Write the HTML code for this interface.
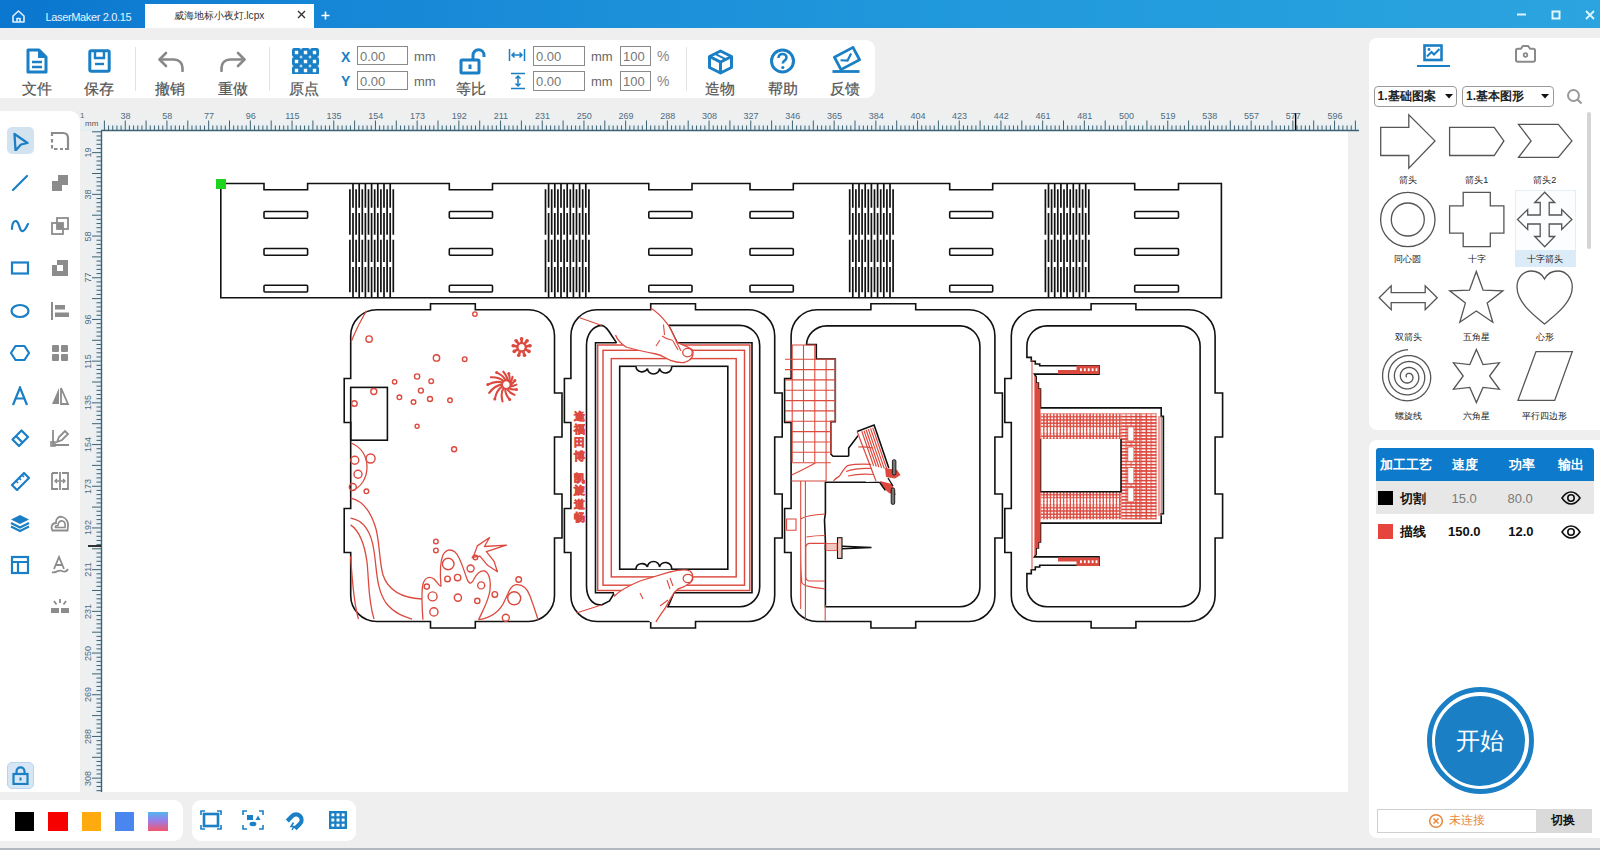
<!DOCTYPE html><html><head><meta charset="utf-8"><title>LaserMaker</title><style>

*{margin:0;padding:0;box-sizing:border-box}
html,body{width:1600px;height:850px;overflow:hidden;background:#efefef;font-family:"Liberation Sans",sans-serif;position:relative}
.a{position:absolute}
.t{position:absolute;white-space:nowrap;line-height:1}


.title{left:0;top:0;width:1600px;height:28px;background:linear-gradient(90deg,#0a76cf 0%,#1585d5 19%,#1c8fd9 38%,#2199dc 62%,#2ba4df 100%)}
.tab{left:145px;top:4px;width:169px;height:24px;background:#fff}
.panel{position:absolute;background:#fff}
.tb-lbl{position:absolute;top:81px;font-size:14.5px;color:#555;-webkit-text-stroke:0.22px #555;white-space:nowrap;line-height:1;width:40px;text-align:center}
.inp{position:absolute;border:1px solid #8a8a8a;background:#fff;font-size:13px;color:#777;line-height:19px;padding-left:2px}
.mm{position:absolute;font-size:13px;color:#666;line-height:1}
.rl{position:absolute;font-size:9px;color:#4d6c82;line-height:1;white-space:nowrap}


.dd{position:absolute;border:1px solid #9a9a9a;border-radius:4px;background:#fff;font-size:12px;font-weight:bold;color:#222;line-height:19px;padding-left:3px;white-space:nowrap}
.sl{position:absolute;font-size:9px;color:#222;white-space:nowrap;line-height:1;text-align:center;width:60px}
.th{position:absolute;font-size:12.5px;color:#fff;white-space:nowrap;line-height:1;font-weight:bold}
.td{position:absolute;font-size:13px;white-space:nowrap;line-height:1;font-weight:bold}

</style></head><body>
<div class="a title"></div>
<svg class="a" style="left:11px;top:9px" width="15" height="14" viewBox="0 0 15 14" ><path d="M2 7 L7.5 2 L13 7 V13 H2 Z M6 13 V9.5 H9 V13" fill="none" stroke="#dff1ff" stroke-width="1.6" stroke-linejoin="round"/></svg>
<div class="t" style="left:45.5px;top:11.5px;font-size:11px;letter-spacing:-0.35px;color:#e6f4ff">LaserMaker 2.0.15</div>
<div class="a tab"></div>
<div class="t" style="left:173.5px;top:11px;font-size:10.2px;color:#333">威海地标小夜灯.lcpx</div>
<svg class="a" style="left:297px;top:10px" width="9" height="9" viewBox="0 0 9 9" ><path d="M1 1L8 8M8 1L1 8" stroke="#333" stroke-width="1.4"/></svg>
<svg class="a" style="left:321px;top:11px" width="9" height="9" viewBox="0 0 9 9" ><path d="M4.5 0.5V8.5M0.5 4.5H8.5" stroke="#fff" stroke-width="1.6"/></svg>
<svg class="a" style="left:1517px;top:13px" width="9" height="3" viewBox="0 0 9 3" ><path d="M0 1.5H9" stroke="#e0f6ff" stroke-width="2"/></svg>
<svg class="a" style="left:1551px;top:10px" width="10" height="10" viewBox="0 0 10 10" ><rect x="1.5" y="1.5" width="7" height="7" fill="none" stroke="#e0f6ff" stroke-width="2"/></svg>
<svg class="a" style="left:1585px;top:10px" width="10" height="10" viewBox="0 0 10 10" ><path d="M1 1L9 9M9 1L1 9" stroke="#e0f6ff" stroke-width="1.8"/></svg>
<div class="panel" style="left:0;top:40px;width:875px;height:58px;border-radius:0 9px 9px 0"></div>
<div class="a" style="left:135px;top:47px;width:1px;height:44px;background:#e2e2e2"></div>
<div class="a" style="left:269px;top:47px;width:1px;height:44px;background:#e2e2e2"></div>
<div class="a" style="left:685.5px;top:47px;width:1px;height:44px;background:#e2e2e2"></div>
<svg class="a" style="left:26px;top:48px" width="22" height="26" viewBox="0 0 22 26" ><path d="M2 2H13L20 9V24H2Z" fill="none" stroke="#1a7fc5" stroke-width="3" stroke-linejoin="round"/><path d="M13 2V9H20" fill="#1a7fc5" stroke="#1a7fc5" stroke-width="2"/><path d="M6 14H16M6 19H16" stroke="#1a7fc5" stroke-width="2.4"/></svg>
<div class="tb-lbl" style="left:17px;top:81.5px">文件</div>
<svg class="a" style="left:88px;top:49px" width="23" height="24" viewBox="0 0 23 24" ><rect x="1.8" y="1.8" width="19.4" height="20.4" rx="1.5" fill="none" stroke="#1a7fc5" stroke-width="3"/><path d="M7 2V9H16V2" fill="none" stroke="#1a7fc5" stroke-width="2.4"/><path d="M7 15H16" stroke="#1a7fc5" stroke-width="2.4"/></svg>
<div class="tb-lbl" style="left:79px;top:81.5px">保存</div>
<svg class="a" style="left:157px;top:51px" width="28" height="21" viewBox="0 0 28 21" ><path d="M9 2L2.5 8.5L9 15" fill="none" stroke="#888" stroke-width="2.6" stroke-linecap="round" stroke-linejoin="round"/><path d="M3 8.5H17C22 8.5 25.5 12 25.5 17V20" fill="none" stroke="#888" stroke-width="2.6" stroke-linecap="round"/></svg>
<div class="tb-lbl" style="left:150px;top:81.5px">撤销</div>
<svg class="a" style="left:219px;top:51px" width="28" height="21" viewBox="0 0 28 21" ><path d="M19 2L25.5 8.5L19 15" fill="none" stroke="#888" stroke-width="2.6" stroke-linecap="round" stroke-linejoin="round"/><path d="M25 8.5H11C6 8.5 2.5 12 2.5 17V20" fill="none" stroke="#888" stroke-width="2.6" stroke-linecap="round"/></svg>
<div class="tb-lbl" style="left:213px;top:81.5px">重做</div>
<svg class="a" style="left:292px;top:48px" width="27" height="26" viewBox="0 0 27 26" ><rect x="1.4" y="1.4" width="6.2" height="6.2" rx="0.8" fill="none" stroke="#1a7fc5" stroke-width="2.8"/><rect x="10.4" y="1.4" width="6.2" height="6.2" rx="0.8" fill="none" stroke="#1a7fc5" stroke-width="2.8"/><rect x="19.4" y="1.4" width="6.2" height="6.2" rx="0.8" fill="none" stroke="#1a7fc5" stroke-width="2.8"/><rect x="1.4" y="10.4" width="6.2" height="6.2" rx="0.8" fill="none" stroke="#1a7fc5" stroke-width="2.8"/><rect x="10.4" y="10.4" width="6.2" height="6.2" rx="0.8" fill="none" stroke="#1a7fc5" stroke-width="2.8"/><rect x="19.4" y="10.4" width="6.2" height="6.2" rx="0.8" fill="none" stroke="#1a7fc5" stroke-width="2.8"/><rect x="1.4" y="19.4" width="6.2" height="6.2" rx="0.8" fill="none" stroke="#1a7fc5" stroke-width="2.8"/><rect x="10.4" y="19.4" width="6.2" height="6.2" rx="0.8" fill="none" stroke="#1a7fc5" stroke-width="2.8"/><rect x="19.4" y="19.4" width="6.2" height="6.2" rx="0.8" fill="none" stroke="#1a7fc5" stroke-width="2.8"/></svg>
<div class="tb-lbl" style="left:284px;top:81.5px">原点</div>
<div class="t" style="left:341px;top:50px;font-size:14px;font-weight:bold;color:#1a7fc5">X</div>
<div class="t" style="left:341px;top:74px;font-size:14px;font-weight:bold;color:#1a7fc5">Y</div>
<div class="inp" style="left:357px;top:46px;width:51px;height:19px">0.00</div>
<div class="inp" style="left:357px;top:71px;width:51px;height:19px">0.00</div>
<div class="mm" style="left:414px;top:50px">mm</div>
<div class="mm" style="left:414px;top:75px">mm</div>
<svg class="a" style="left:459px;top:48px" width="28" height="27" viewBox="0 0 28 27" ><rect x="2" y="12" width="18" height="13" rx="1" fill="none" stroke="#1a7fc5" stroke-width="3"/><path d="M14 12V7.5C14 4 16.5 1.8 19.5 1.8C22.5 1.8 25 4 25 7.5V9" fill="none" stroke="#1a7fc5" stroke-width="3"/><rect x="9.5" y="16.5" width="3" height="4.5" fill="#1a7fc5"/></svg>
<div class="tb-lbl" style="left:451px;top:81.5px">等比</div>
<svg class="a" style="left:508px;top:48px" width="18" height="14" viewBox="0 0 18 14" ><path d="M1.5 1V13M16.5 1V13M4 7H14M6.5 4.5L4 7L6.5 9.5M11.5 4.5L14 7L11.5 9.5" fill="none" stroke="#1a7fc5" stroke-width="1.5"/></svg>
<svg class="a" style="left:510px;top:72px" width="16" height="18" viewBox="0 0 16 18" ><path d="M1 1.5H15M1 16.5H15M8 4V14M5.5 6.5L8 4L10.5 6.5M5.5 11.5L8 14L10.5 11.5" fill="none" stroke="#1a7fc5" stroke-width="1.5"/></svg>
<div class="inp" style="left:533px;top:46px;width:52px;height:20px">0.00</div>
<div class="inp" style="left:533px;top:71px;width:52px;height:20px">0.00</div>
<div class="mm" style="left:591px;top:50px">mm</div>
<div class="mm" style="left:591px;top:75px">mm</div>
<div class="inp" style="left:620px;top:46px;width:31px;height:20px">100</div>
<div class="inp" style="left:620px;top:71px;width:31px;height:20px">100</div>
<div class="mm" style="left:657px;top:49px;font-size:14px;color:#888">%</div>
<div class="mm" style="left:657px;top:74px;font-size:14px;color:#888">%</div>
<svg class="a" style="left:707px;top:49px" width="27" height="26" viewBox="0 0 27 26" ><path d="M13.5 2L24.5 7.5V18.5L13.5 24L2.5 18.5V7.5Z" fill="none" stroke="#1a7fc5" stroke-width="3" stroke-linejoin="round"/><path d="M2.5 7.5L13.5 13L24.5 7.5M13.5 13V24" fill="none" stroke="#1a7fc5" stroke-width="3"/><path d="M8 4.8L19 10.3" stroke="#1a7fc5" stroke-width="2"/></svg>
<div class="tb-lbl" style="left:700px;top:81.5px">造物</div>
<svg class="a" style="left:769px;top:48px" width="28" height="26" viewBox="0 0 28 26" ><circle cx="13.5" cy="13" r="11" fill="none" stroke="#1a7fc5" stroke-width="3"/><path d="M9.5 10C9.5 7.5 11.3 6 13.5 6C15.8 6 17.5 7.5 17.5 9.6C17.5 12.5 13.8 12.6 13.8 15.5" fill="none" stroke="#1a7fc5" stroke-width="2.6"/><circle cx="13.8" cy="19.5" r="1.6" fill="#1a7fc5"/></svg>
<div class="tb-lbl" style="left:763px;top:81.5px">帮助</div>
<svg class="a" style="left:831px;top:46px" width="30" height="28" viewBox="0 0 30 28" ><g transform="rotate(-28 16 12.5)"><rect x="5.5" y="5.5" width="21" height="14" fill="none" stroke="#1a7fc5" stroke-width="2.8" stroke-linejoin="round"/><path d="M9.5 11L15.5 14.5L22 10" fill="none" stroke="#1a7fc5" stroke-width="2.2"/></g><path d="M1.5 25.5H28.5" stroke="#1a7fc5" stroke-width="2.8"/></svg>
<div class="tb-lbl" style="left:825px;top:81.5px">反馈</div>
<div class="panel" style="left:0;top:111px;width:80px;height:681px;border-radius:0 10px 0 0"></div>
<div class="a" style="left:7px;top:127px;width:27px;height:27px;border-radius:5px;background:#d3e2ef"></div>
<div class="a" style="left:7px;top:762px;width:27px;height:27px;border-radius:5px;background:#d6e6f4;border:1px solid #b8d3ea"></div>
<svg class="a" style="left:10px;top:131px" width="20" height="20" viewBox="0 0 20 20" ><path d="M4.5 3L17.5 12L11 13.5L5.5 19.5Z" fill="none" stroke="#1a7fc5" stroke-width="2.3" stroke-linejoin="round"/></svg>
<svg class="a" style="left:10px;top:173px" width="20" height="20" viewBox="0 0 20 20" ><path d="M3 17L17 3" stroke="#1a7fc5" stroke-width="2.2" stroke-linecap="round"/></svg>
<svg class="a" style="left:10px;top:216px" width="20" height="20" viewBox="0 0 20 20" ><path d="M2 13C2 5 6 3 8 7C10 11 10 16 13 15C16 14 17 9 18 8" fill="none" stroke="#1a7fc5" stroke-width="2.2" stroke-linecap="round"/></svg>
<svg class="a" style="left:10px;top:258px" width="20" height="20" viewBox="0 0 20 20" ><rect x="2" y="4.5" width="16" height="11" fill="none" stroke="#1a7fc5" stroke-width="2.2"/></svg>
<svg class="a" style="left:10px;top:301px" width="20" height="20" viewBox="0 0 20 20" ><ellipse cx="10" cy="10" rx="8.5" ry="6" fill="none" stroke="#1a7fc5" stroke-width="2.2"/></svg>
<svg class="a" style="left:10px;top:343px" width="20" height="20" viewBox="0 0 20 20" ><path d="M5.5 3H14.5L19 10L14.5 17H5.5L1 10Z" fill="none" stroke="#1a7fc5" stroke-width="2.2" stroke-linejoin="round"/></svg>
<svg class="a" style="left:10px;top:386px" width="20" height="20" viewBox="0 0 20 20" ><path d="M3 19L10 1.5L17 19M5.5 12.5H14.5" fill="none" stroke="#1a7fc5" stroke-width="2.2"/></svg>
<svg class="a" style="left:10px;top:428px" width="20" height="20" viewBox="0 0 20 20" ><path d="M11.5 2.5L18 9L9 18L2.5 11.5ZM6 8L12.5 14.5" fill="none" stroke="#1a7fc5" stroke-width="2.2" stroke-linejoin="round"/></svg>
<svg class="a" style="left:10px;top:471px" width="20" height="20" viewBox="0 0 20 20" ><path d="M14 2L19 7L7 19L2 14Z" fill="none" stroke="#1a7fc5" stroke-width="2.2" stroke-linejoin="round"/><path d="M6 10L8 12M9 7L11 9M12 4L14 6" stroke="#1a7fc5" stroke-width="1.6"/></svg>
<svg class="a" style="left:10px;top:513px" width="20" height="20" viewBox="0 0 20 20" ><path d="M10 2L19 6.5L10 11L1 6.5Z" fill="#1a7fc5"/><path d="M1 10L10 14.5L19 10M1 13.5L10 18L19 13.5" fill="none" stroke="#1a7fc5" stroke-width="2.2"/></svg>
<svg class="a" style="left:10px;top:555px" width="20" height="20" viewBox="0 0 20 20" ><rect x="2" y="2" width="16" height="16" fill="none" stroke="#1a7fc5" stroke-width="2.2"/><path d="M2 7H18M8 7V18" stroke="#1a7fc5" stroke-width="2.2"/></svg>
<svg class="a" style="left:50px;top:131px" width="20" height="20" viewBox="0 0 20 20" ><path d="M2 5V2H13C16 2 18 4 18 7V18H15" fill="none" stroke="#8c8c8c" stroke-width="2.2"/><path d="M2 8V18H13" fill="none" stroke="#8c8c8c" stroke-width="2.2" stroke-dasharray="3.5 2.5"/></svg>
<svg class="a" style="left:50px;top:173px" width="20" height="20" viewBox="0 0 20 20" ><path d="M8 2H18V12H12V18H2V8H8Z" fill="#8c8c8c"/></svg>
<svg class="a" style="left:50px;top:216px" width="20" height="20" viewBox="0 0 20 20" ><rect x="2" y="7" width="11" height="11" fill="none" stroke="#8c8c8c" stroke-width="1.8"/><rect x="7" y="2" width="11" height="11" fill="none" stroke="#8c8c8c" stroke-width="1.8"/><rect x="7" y="7" width="6" height="6" fill="#8c8c8c"/></svg>
<svg class="a" style="left:50px;top:258px" width="20" height="20" viewBox="0 0 20 20" ><path d="M7 2H18V13H13V7H7Z M2 7H13V13H18V18H2Z" fill="#8c8c8c"/><rect x="7" y="7" width="6" height="6" fill="#fff"/></svg>
<svg class="a" style="left:50px;top:301px" width="20" height="20" viewBox="0 0 20 20" ><path d="M2 1V19" stroke="#8c8c8c" stroke-width="2"/><rect x="5" y="4" width="10" height="4.5" fill="#8c8c8c"/><rect x="5" y="11.5" width="14" height="4.5" fill="#8c8c8c"/></svg>
<svg class="a" style="left:50px;top:343px" width="20" height="20" viewBox="0 0 20 20" ><rect x="2" y="2" width="7" height="7" rx="1" fill="#8c8c8c"/><rect x="11" y="2" width="7" height="7" rx="1" fill="#8c8c8c"/><rect x="2" y="11" width="7" height="7" rx="1" fill="#8c8c8c"/><rect x="11" y="11" width="7" height="7" rx="1" fill="#8c8c8c"/></svg>
<svg class="a" style="left:50px;top:386px" width="20" height="20" viewBox="0 0 20 20" ><path d="M9 2V18H2Z" fill="#8c8c8c"/><path d="M11 2L18 18H11Z" fill="none" stroke="#8c8c8c" stroke-width="1.8"/></svg>
<svg class="a" style="left:50px;top:428px" width="20" height="20" viewBox="0 0 20 20" ><path d="M3 2V17H19" fill="none" stroke="#8c8c8c" stroke-width="1.8"/><path d="M7 14L9 9L15 3L18 6L12 12Z" fill="none" stroke="#8c8c8c" stroke-width="1.8"/><rect x="1" y="14" width="4" height="4" fill="none" stroke="#8c8c8c" stroke-width="1.6"/></svg>
<svg class="a" style="left:50px;top:471px" width="20" height="20" viewBox="0 0 20 20" ><path d="M2 2H8M12 2H18V18H12M8 18H2V2M10 1V19" fill="none" stroke="#8c8c8c" stroke-width="1.8"/><path d="M5 10H9M11 10H15M7 8L5 10L7 12M13 8L15 10L13 12" fill="none" stroke="#8c8c8c" stroke-width="1.4"/></svg>
<svg class="a" style="left:50px;top:513px" width="20" height="20" viewBox="0 0 20 20" ><path d="M2.5 17.5C0.5 14 2 10 6 10C5.5 5.5 9 3 12.5 4C16.5 5 18.5 9.5 18 13.5L17.5 17.5Z" fill="none" stroke="#8c8c8c" stroke-width="1.8"/><path d="M5.5 14.5C5 13 6 12.5 8 12.5C8 9.5 10 7.5 12.5 8C14.5 8.5 15.5 11 15 14.5Z" fill="none" stroke="#8c8c8c" stroke-width="1.6"/></svg>
<svg class="a" style="left:50px;top:555px" width="20" height="20" viewBox="0 0 20 20" ><path d="M4 14L9 2L14 14M6 10H12M2 17C5 19 8 14 12 16C15 17.5 17 16 18 14" fill="none" stroke="#8c8c8c" stroke-width="1.8"/></svg>
<svg class="a" style="left:50px;top:598px" width="20" height="20" viewBox="0 0 20 20" ><path d="M10 1V5M4 3L6.5 6.5M16 3L13.5 6.5" stroke="#8c8c8c" stroke-width="1.8"/><rect x="1" y="10" width="8" height="5" fill="#8c8c8c"/><rect x="11" y="10" width="8" height="5" fill="#8c8c8c"/></svg>
<svg class="a" style="left:12px;top:766px" width="17" height="19" viewBox="0 0 17 19" ><rect x="1.5" y="8" width="14" height="10" fill="none" stroke="#1a7fc5" stroke-width="2.2"/><path d="M4.5 8V5.5C4.5 3 6.3 1.3 8.5 1.3C10.7 1.3 12.5 3 12.5 5.5V8" fill="none" stroke="#1a7fc5" stroke-width="2.2"/><rect x="7.5" y="11.5" width="2" height="3" fill="#1a7fc5"/></svg>
<div class="a" style="left:81px;top:111px;width:1278px;height:20px;background:linear-gradient(180deg,#efefef 0%,#eef0f1 55%,#e2eef3 100%)"></div>
<div class="a" style="left:81px;top:131px;width:21px;height:661px;background:linear-gradient(90deg,#efefef 0%,#eef0f1 55%,#e2eef3 100%)"></div>
<div class="a" style="left:102px;top:131px;width:1246px;height:661px;background:#fff"></div>
<svg class="a" style="left:0;top:0" width="1600" height="850"><path d="M104.40 120.5V130 M108.57 125.5V130 M112.74 125.5V130 M116.91 125.5V130 M121.08 125.5V130 M125.25 120.5V130 M129.42 125.5V130 M133.59 125.5V130 M137.76 125.5V130 M141.93 125.5V130 M146.10 120.5V130 M150.27 125.5V130 M154.44 125.5V130 M158.61 125.5V130 M162.78 125.5V130 M166.95 120.5V130 M171.12 125.5V130 M175.29 125.5V130 M179.46 125.5V130 M183.63 125.5V130 M187.80 120.5V130 M191.97 125.5V130 M196.14 125.5V130 M200.31 125.5V130 M204.48 125.5V130 M208.65 120.5V130 M212.82 125.5V130 M216.99 125.5V130 M221.16 125.5V130 M225.33 125.5V130 M229.50 120.5V130 M233.67 125.5V130 M237.84 125.5V130 M242.01 125.5V130 M246.18 125.5V130 M250.35 120.5V130 M254.52 125.5V130 M258.69 125.5V130 M262.86 125.5V130 M267.03 125.5V130 M271.20 120.5V130 M275.37 125.5V130 M279.54 125.5V130 M283.71 125.5V130 M287.88 125.5V130 M292.05 120.5V130 M296.22 125.5V130 M300.39 125.5V130 M304.56 125.5V130 M308.73 125.5V130 M312.90 120.5V130 M317.07 125.5V130 M321.24 125.5V130 M325.41 125.5V130 M329.58 125.5V130 M333.75 120.5V130 M337.92 125.5V130 M342.09 125.5V130 M346.26 125.5V130 M350.43 125.5V130 M354.60 120.5V130 M358.77 125.5V130 M362.94 125.5V130 M367.11 125.5V130 M371.28 125.5V130 M375.45 120.5V130 M379.62 125.5V130 M383.79 125.5V130 M387.96 125.5V130 M392.13 125.5V130 M396.30 120.5V130 M400.47 125.5V130 M404.64 125.5V130 M408.81 125.5V130 M412.98 125.5V130 M417.15 120.5V130 M421.32 125.5V130 M425.49 125.5V130 M429.66 125.5V130 M433.83 125.5V130 M438.00 120.5V130 M442.17 125.5V130 M446.34 125.5V130 M450.51 125.5V130 M454.68 125.5V130 M458.85 120.5V130 M463.02 125.5V130 M467.19 125.5V130 M471.36 125.5V130 M475.53 125.5V130 M479.70 120.5V130 M483.87 125.5V130 M488.04 125.5V130 M492.21 125.5V130 M496.38 125.5V130 M500.55 120.5V130 M504.72 125.5V130 M508.89 125.5V130 M513.06 125.5V130 M517.23 125.5V130 M521.40 120.5V130 M525.57 125.5V130 M529.74 125.5V130 M533.91 125.5V130 M538.08 125.5V130 M542.25 120.5V130 M546.42 125.5V130 M550.59 125.5V130 M554.76 125.5V130 M558.93 125.5V130 M563.10 120.5V130 M567.27 125.5V130 M571.44 125.5V130 M575.61 125.5V130 M579.78 125.5V130 M583.95 120.5V130 M588.12 125.5V130 M592.29 125.5V130 M596.46 125.5V130 M600.63 125.5V130 M604.80 120.5V130 M608.97 125.5V130 M613.14 125.5V130 M617.31 125.5V130 M621.48 125.5V130 M625.65 120.5V130 M629.82 125.5V130 M633.99 125.5V130 M638.16 125.5V130 M642.33 125.5V130 M646.50 120.5V130 M650.67 125.5V130 M654.84 125.5V130 M659.01 125.5V130 M663.18 125.5V130 M667.35 120.5V130 M671.52 125.5V130 M675.69 125.5V130 M679.86 125.5V130 M684.03 125.5V130 M688.20 120.5V130 M692.37 125.5V130 M696.54 125.5V130 M700.71 125.5V130 M704.88 125.5V130 M709.05 120.5V130 M713.22 125.5V130 M717.39 125.5V130 M721.56 125.5V130 M725.73 125.5V130 M729.90 120.5V130 M734.07 125.5V130 M738.24 125.5V130 M742.41 125.5V130 M746.58 125.5V130 M750.75 120.5V130 M754.92 125.5V130 M759.09 125.5V130 M763.26 125.5V130 M767.43 125.5V130 M771.60 120.5V130 M775.77 125.5V130 M779.94 125.5V130 M784.11 125.5V130 M788.28 125.5V130 M792.45 120.5V130 M796.62 125.5V130 M800.79 125.5V130 M804.96 125.5V130 M809.13 125.5V130 M813.30 120.5V130 M817.47 125.5V130 M821.64 125.5V130 M825.81 125.5V130 M829.98 125.5V130 M834.15 120.5V130 M838.32 125.5V130 M842.49 125.5V130 M846.66 125.5V130 M850.83 125.5V130 M855.00 120.5V130 M859.17 125.5V130 M863.34 125.5V130 M867.51 125.5V130 M871.68 125.5V130 M875.85 120.5V130 M880.02 125.5V130 M884.19 125.5V130 M888.36 125.5V130 M892.53 125.5V130 M896.70 120.5V130 M900.87 125.5V130 M905.04 125.5V130 M909.21 125.5V130 M913.38 125.5V130 M917.55 120.5V130 M921.72 125.5V130 M925.89 125.5V130 M930.06 125.5V130 M934.23 125.5V130 M938.40 120.5V130 M942.57 125.5V130 M946.74 125.5V130 M950.91 125.5V130 M955.08 125.5V130 M959.25 120.5V130 M963.42 125.5V130 M967.59 125.5V130 M971.76 125.5V130 M975.93 125.5V130 M980.10 120.5V130 M984.27 125.5V130 M988.44 125.5V130 M992.61 125.5V130 M996.78 125.5V130 M1000.95 120.5V130 M1005.12 125.5V130 M1009.29 125.5V130 M1013.46 125.5V130 M1017.63 125.5V130 M1021.80 120.5V130 M1025.97 125.5V130 M1030.14 125.5V130 M1034.31 125.5V130 M1038.48 125.5V130 M1042.65 120.5V130 M1046.82 125.5V130 M1050.99 125.5V130 M1055.16 125.5V130 M1059.33 125.5V130 M1063.50 120.5V130 M1067.67 125.5V130 M1071.84 125.5V130 M1076.01 125.5V130 M1080.18 125.5V130 M1084.35 120.5V130 M1088.52 125.5V130 M1092.69 125.5V130 M1096.86 125.5V130 M1101.03 125.5V130 M1105.20 120.5V130 M1109.37 125.5V130 M1113.54 125.5V130 M1117.71 125.5V130 M1121.88 125.5V130 M1126.05 120.5V130 M1130.22 125.5V130 M1134.39 125.5V130 M1138.56 125.5V130 M1142.73 125.5V130 M1146.90 120.5V130 M1151.07 125.5V130 M1155.24 125.5V130 M1159.41 125.5V130 M1163.58 125.5V130 M1167.75 120.5V130 M1171.92 125.5V130 M1176.09 125.5V130 M1180.26 125.5V130 M1184.43 125.5V130 M1188.60 120.5V130 M1192.77 125.5V130 M1196.94 125.5V130 M1201.11 125.5V130 M1205.28 125.5V130 M1209.45 120.5V130 M1213.62 125.5V130 M1217.79 125.5V130 M1221.96 125.5V130 M1226.13 125.5V130 M1230.30 120.5V130 M1234.47 125.5V130 M1238.64 125.5V130 M1242.81 125.5V130 M1246.98 125.5V130 M1251.15 120.5V130 M1255.32 125.5V130 M1259.49 125.5V130 M1263.66 125.5V130 M1267.83 125.5V130 M1272.00 120.5V130 M1276.17 125.5V130 M1280.34 125.5V130 M1284.51 125.5V130 M1288.68 125.5V130 M1292.85 120.5V130 M1297.02 125.5V130 M1301.19 125.5V130 M1305.36 125.5V130 M1309.53 125.5V130 M1313.70 120.5V130 M1317.87 125.5V130 M1322.04 125.5V130 M1326.21 125.5V130 M1330.38 125.5V130 M1334.55 120.5V130 M1338.72 125.5V130 M1342.89 125.5V130 M1347.06 125.5V130 M1351.23 125.5V130 M1355.40 120.5V130 M92 131.80H101 M96.5 135.97H101 M96.5 140.14H101 M96.5 144.31H101 M96.5 148.48H101 M92 152.65H101 M96.5 156.82H101 M96.5 160.99H101 M96.5 165.16H101 M96.5 169.33H101 M92 173.50H101 M96.5 177.67H101 M96.5 181.84H101 M96.5 186.01H101 M96.5 190.18H101 M92 194.35H101 M96.5 198.52H101 M96.5 202.69H101 M96.5 206.86H101 M96.5 211.03H101 M92 215.20H101 M96.5 219.37H101 M96.5 223.54H101 M96.5 227.71H101 M96.5 231.88H101 M92 236.05H101 M96.5 240.22H101 M96.5 244.39H101 M96.5 248.56H101 M96.5 252.73H101 M92 256.90H101 M96.5 261.07H101 M96.5 265.24H101 M96.5 269.41H101 M96.5 273.58H101 M92 277.75H101 M96.5 281.92H101 M96.5 286.09H101 M96.5 290.26H101 M96.5 294.43H101 M92 298.60H101 M96.5 302.77H101 M96.5 306.94H101 M96.5 311.11H101 M96.5 315.28H101 M92 319.45H101 M96.5 323.62H101 M96.5 327.79H101 M96.5 331.96H101 M96.5 336.13H101 M92 340.30H101 M96.5 344.47H101 M96.5 348.64H101 M96.5 352.81H101 M96.5 356.98H101 M92 361.15H101 M96.5 365.32H101 M96.5 369.49H101 M96.5 373.66H101 M96.5 377.83H101 M92 382.00H101 M96.5 386.17H101 M96.5 390.34H101 M96.5 394.51H101 M96.5 398.68H101 M92 402.85H101 M96.5 407.02H101 M96.5 411.19H101 M96.5 415.36H101 M96.5 419.53H101 M92 423.70H101 M96.5 427.87H101 M96.5 432.04H101 M96.5 436.21H101 M96.5 440.38H101 M92 444.55H101 M96.5 448.72H101 M96.5 452.89H101 M96.5 457.06H101 M96.5 461.23H101 M92 465.40H101 M96.5 469.57H101 M96.5 473.74H101 M96.5 477.91H101 M96.5 482.08H101 M92 486.25H101 M96.5 490.42H101 M96.5 494.59H101 M96.5 498.76H101 M96.5 502.93H101 M92 507.10H101 M96.5 511.27H101 M96.5 515.44H101 M96.5 519.61H101 M96.5 523.78H101 M92 527.95H101 M96.5 532.12H101 M96.5 536.29H101 M96.5 540.46H101 M96.5 544.63H101 M92 548.80H101 M96.5 552.97H101 M96.5 557.14H101 M96.5 561.31H101 M96.5 565.48H101 M92 569.65H101 M96.5 573.82H101 M96.5 577.99H101 M96.5 582.16H101 M96.5 586.33H101 M92 590.50H101 M96.5 594.67H101 M96.5 598.84H101 M96.5 603.01H101 M96.5 607.18H101 M92 611.35H101 M96.5 615.52H101 M96.5 619.69H101 M96.5 623.86H101 M96.5 628.03H101 M92 632.20H101 M96.5 636.37H101 M96.5 640.54H101 M96.5 644.71H101 M96.5 648.88H101 M92 653.05H101 M96.5 657.22H101 M96.5 661.39H101 M96.5 665.56H101 M96.5 669.73H101 M92 673.90H101 M96.5 678.07H101 M96.5 682.24H101 M96.5 686.41H101 M96.5 690.58H101 M92 694.75H101 M96.5 698.92H101 M96.5 703.09H101 M96.5 707.26H101 M96.5 711.43H101 M92 715.60H101 M96.5 719.77H101 M96.5 723.94H101 M96.5 728.11H101 M96.5 732.28H101 M92 736.45H101 M96.5 740.62H101 M96.5 744.79H101 M96.5 748.96H101 M96.5 753.13H101 M92 757.30H101 M96.5 761.47H101 M96.5 765.64H101 M96.5 769.81H101 M96.5 773.98H101 M92 778.15H101 M96.5 782.32H101 M96.5 786.49H101 M96.5 790.66H101" stroke="#3d6274" stroke-width="1" fill="none"/><path d="M101 130.5H1359M101.5 131V792" stroke="#3d6274" stroke-width="1.4"/><path d="M1295.6 113V130" stroke="#000" stroke-width="1.4"/><path d="M88 546H101" stroke="#000" stroke-width="1.6"/></svg>
<div class="rl" style="left:110.6px;top:112px;width:30px;text-align:center">38</div>
<div class="rl" style="left:152.3px;top:112px;width:30px;text-align:center">58</div>
<div class="rl" style="left:194.0px;top:112px;width:30px;text-align:center">77</div>
<div class="rl" style="left:235.7px;top:112px;width:30px;text-align:center">96</div>
<div class="rl" style="left:277.4px;top:112px;width:30px;text-align:center">115</div>
<div class="rl" style="left:319.1px;top:112px;width:30px;text-align:center">135</div>
<div class="rl" style="left:360.8px;top:112px;width:30px;text-align:center">154</div>
<div class="rl" style="left:402.5px;top:112px;width:30px;text-align:center">173</div>
<div class="rl" style="left:444.2px;top:112px;width:30px;text-align:center">192</div>
<div class="rl" style="left:485.9px;top:112px;width:30px;text-align:center">211</div>
<div class="rl" style="left:527.6px;top:112px;width:30px;text-align:center">231</div>
<div class="rl" style="left:569.3px;top:112px;width:30px;text-align:center">250</div>
<div class="rl" style="left:611.0px;top:112px;width:30px;text-align:center">269</div>
<div class="rl" style="left:652.7px;top:112px;width:30px;text-align:center">288</div>
<div class="rl" style="left:694.4px;top:112px;width:30px;text-align:center">308</div>
<div class="rl" style="left:736.1px;top:112px;width:30px;text-align:center">327</div>
<div class="rl" style="left:777.8px;top:112px;width:30px;text-align:center">346</div>
<div class="rl" style="left:819.5px;top:112px;width:30px;text-align:center">365</div>
<div class="rl" style="left:861.2px;top:112px;width:30px;text-align:center">384</div>
<div class="rl" style="left:902.9px;top:112px;width:30px;text-align:center">404</div>
<div class="rl" style="left:944.6px;top:112px;width:30px;text-align:center">423</div>
<div class="rl" style="left:986.3px;top:112px;width:30px;text-align:center">442</div>
<div class="rl" style="left:1028.0px;top:112px;width:30px;text-align:center">461</div>
<div class="rl" style="left:1069.7px;top:112px;width:30px;text-align:center">481</div>
<div class="rl" style="left:1111.4px;top:112px;width:30px;text-align:center">500</div>
<div class="rl" style="left:1153.1px;top:112px;width:30px;text-align:center">519</div>
<div class="rl" style="left:1194.8px;top:112px;width:30px;text-align:center">538</div>
<div class="rl" style="left:1236.5px;top:112px;width:30px;text-align:center">557</div>
<div class="rl" style="left:1278.2px;top:112px;width:30px;text-align:center">577</div>
<div class="rl" style="left:1319.9px;top:112px;width:30px;text-align:center">596</div>
<div class="rl" style="left:73.0px;top:148.1px;width:30px;text-align:center;transform:rotate(-90deg)">19</div>
<div class="rl" style="left:73.0px;top:189.8px;width:30px;text-align:center;transform:rotate(-90deg)">38</div>
<div class="rl" style="left:73.0px;top:231.5px;width:30px;text-align:center;transform:rotate(-90deg)">58</div>
<div class="rl" style="left:73.0px;top:273.2px;width:30px;text-align:center;transform:rotate(-90deg)">77</div>
<div class="rl" style="left:73.0px;top:314.9px;width:30px;text-align:center;transform:rotate(-90deg)">96</div>
<div class="rl" style="left:73.0px;top:356.6px;width:30px;text-align:center;transform:rotate(-90deg)">115</div>
<div class="rl" style="left:73.0px;top:398.3px;width:30px;text-align:center;transform:rotate(-90deg)">135</div>
<div class="rl" style="left:73.0px;top:440.0px;width:30px;text-align:center;transform:rotate(-90deg)">154</div>
<div class="rl" style="left:73.0px;top:481.7px;width:30px;text-align:center;transform:rotate(-90deg)">173</div>
<div class="rl" style="left:73.0px;top:523.4px;width:30px;text-align:center;transform:rotate(-90deg)">192</div>
<div class="rl" style="left:73.0px;top:565.1px;width:30px;text-align:center;transform:rotate(-90deg)">211</div>
<div class="rl" style="left:73.0px;top:606.8px;width:30px;text-align:center;transform:rotate(-90deg)">231</div>
<div class="rl" style="left:73.0px;top:648.5px;width:30px;text-align:center;transform:rotate(-90deg)">250</div>
<div class="rl" style="left:73.0px;top:690.2px;width:30px;text-align:center;transform:rotate(-90deg)">269</div>
<div class="rl" style="left:73.0px;top:731.9px;width:30px;text-align:center;transform:rotate(-90deg)">288</div>
<div class="rl" style="left:73.0px;top:773.6px;width:30px;text-align:center;transform:rotate(-90deg)">308</div>
<div class="rl" style="left:85px;top:119.5px;font-size:8px;color:#555">mm</div>
<div class="rl" style="left:80px;top:112px;font-size:8px;color:#666">1</div>
<div class="panel" style="left:0;top:800px;width:183px;height:41px;border-radius:0 9px 9px 0"></div>
<div class="a" style="left:15px;top:812px;width:19px;height:19px;background:#000"></div>
<div class="a" style="left:48px;top:812px;width:20px;height:19px;background:#f60000"></div>
<div class="a" style="left:81.5px;top:812px;width:19.5px;height:19px;background:#ffaa0f"></div>
<div class="a" style="left:115px;top:812px;width:19px;height:19px;background:#4a86ef"></div>
<div class="a" style="left:148px;top:812px;width:19.5px;height:19px;background:linear-gradient(180deg,#52b6f0 0%,#9a7ee8 45%,#f4566a 100%)"></div>
<div class="panel" style="left:192px;top:800px;width:164px;height:41px;border-radius:9px"></div>
<svg class="a" style="left:200px;top:810px" width="22" height="20" viewBox="0 0 22 20" ><rect x="4" y="4" width="14" height="12" fill="none" stroke="#1a7fc5" stroke-width="2.6"/><path d="M1 5V1H5M17 1H21V5M21 15V19H17M5 19H1V15" fill="none" stroke="#1a7fc5" stroke-width="1.6"/></svg>
<svg class="a" style="left:242px;top:810px" width="22" height="20" viewBox="0 0 22 20" ><path d="M1 5V1H5M17 1H21V5M21 15V19H17M5 19H1V15" fill="none" stroke="#1a7fc5" stroke-width="1.6"/><rect x="5" y="5" width="6" height="5" fill="#1a7fc5"/><path d="M13.5 10L16 5.5L18.5 10Z" fill="#1a7fc5"/><ellipse cx="11" cy="14" rx="3.5" ry="2.2" fill="#1a7fc5"/></svg>
<svg class="a" style="left:284px;top:809px" width="24" height="22" viewBox="0 0 24 22" ><g transform="translate(13.5 9.5) rotate(45)"><path d="M-5.5 9V2A5.5 5.5 0 0 1 5.5 2V9" fill="none" stroke="#1a7fc5" stroke-width="4.2"/></g><path d="M9.5 13.5L7 17.5H10L8 21" fill="none" stroke="#1a7fc5" stroke-width="1.5"/></svg>
<svg class="a" style="left:329px;top:811px" width="18" height="18" viewBox="0 0 18 18" ><rect x="1.2" y="1.2" width="15.6" height="15.6" fill="none" stroke="#1a7fc5" stroke-width="2.4"/><path d="M6.4 1V17M11.6 1V17M1 6.4H17M1 11.6H17" stroke="#1a7fc5" stroke-width="2.2"/></svg>
<div class="a" style="left:0;top:848px;width:1600px;height:2px;background:#b3b7bf"></div>
<svg class="a" style="left:0;top:0" width="1600" height="850" viewBox="0 0 1600 850">
<path d="M220.8 183.5H264V189.8H307.6V183.5H449.3V189.8H492.5V183.5H648.8V189.8H692V183.5H750V189.8H793.3V183.5H949.7V189.8H992.7V183.5H1134.7V189.8H1178.5V183.5H1221.4V297.8H220.8Z" fill="none" stroke="#111" stroke-width="1.6"/>
<g fill="none" stroke="#111" stroke-width="1.6"><rect x="264" y="211.5" width="43.6" height="6.8" rx="1"/><rect x="264" y="248.5" width="43.6" height="6.8" rx="1"/><rect x="264" y="285.2" width="43.6" height="6.8" rx="1"/><rect x="449.3" y="211.5" width="43.2" height="6.8" rx="1"/><rect x="449.3" y="248.5" width="43.2" height="6.8" rx="1"/><rect x="449.3" y="285.2" width="43.2" height="6.8" rx="1"/><rect x="648.8" y="211.5" width="43.2" height="6.8" rx="1"/><rect x="648.8" y="248.5" width="43.2" height="6.8" rx="1"/><rect x="648.8" y="285.2" width="43.2" height="6.8" rx="1"/><rect x="750" y="211.5" width="43.3" height="6.8" rx="1"/><rect x="750" y="248.5" width="43.3" height="6.8" rx="1"/><rect x="750" y="285.2" width="43.3" height="6.8" rx="1"/><rect x="949.7" y="211.5" width="43.0" height="6.8" rx="1"/><rect x="949.7" y="248.5" width="43.0" height="6.8" rx="1"/><rect x="949.7" y="285.2" width="43.0" height="6.8" rx="1"/><rect x="1134.7" y="211.5" width="43.8" height="6.8" rx="1"/><rect x="1134.7" y="248.5" width="43.8" height="6.8" rx="1"/><rect x="1134.7" y="285.2" width="43.8" height="6.8" rx="1"/></g>
<path d="M349.90 189.3V234.8M349.90 239.8V292.2M356.10 189.3V234.8M356.10 239.8V292.2M362.30 189.3V234.8M362.30 239.8V292.2M368.50 189.3V234.8M368.50 239.8V292.2M374.70 189.3V234.8M374.70 239.8V292.2M380.90 189.3V234.8M380.90 239.8V292.2M387.10 189.3V234.8M387.10 239.8V292.2M393.30 189.3V234.8M393.30 239.8V292.2M353.00 183.5V207.8M353.00 213V262M353.00 267V297.8M359.20 183.5V207.8M359.20 213V262M359.20 267V297.8M365.40 183.5V207.8M365.40 213V262M365.40 267V297.8M371.60 183.5V207.8M371.60 213V262M371.60 267V297.8M377.80 183.5V207.8M377.80 213V262M377.80 267V297.8M384.00 183.5V207.8M384.00 213V262M384.00 267V297.8M390.20 183.5V207.8M390.20 213V262M390.20 267V297.8M545.50 189.3V234.8M545.50 239.8V292.2M551.70 189.3V234.8M551.70 239.8V292.2M557.90 189.3V234.8M557.90 239.8V292.2M564.10 189.3V234.8M564.10 239.8V292.2M570.30 189.3V234.8M570.30 239.8V292.2M576.50 189.3V234.8M576.50 239.8V292.2M582.70 189.3V234.8M582.70 239.8V292.2M588.90 189.3V234.8M588.90 239.8V292.2M548.60 183.5V207.8M548.60 213V262M548.60 267V297.8M554.80 183.5V207.8M554.80 213V262M554.80 267V297.8M561.00 183.5V207.8M561.00 213V262M561.00 267V297.8M567.20 183.5V207.8M567.20 213V262M567.20 267V297.8M573.40 183.5V207.8M573.40 213V262M573.40 267V297.8M579.60 183.5V207.8M579.60 213V262M579.60 267V297.8M585.80 183.5V207.8M585.80 213V262M585.80 267V297.8M849.70 189.3V234.8M849.70 239.8V292.2M855.90 189.3V234.8M855.90 239.8V292.2M862.10 189.3V234.8M862.10 239.8V292.2M868.30 189.3V234.8M868.30 239.8V292.2M874.50 189.3V234.8M874.50 239.8V292.2M880.70 189.3V234.8M880.70 239.8V292.2M886.90 189.3V234.8M886.90 239.8V292.2M893.10 189.3V234.8M893.10 239.8V292.2M852.80 183.5V207.8M852.80 213V262M852.80 267V297.8M859.00 183.5V207.8M859.00 213V262M859.00 267V297.8M865.20 183.5V207.8M865.20 213V262M865.20 267V297.8M871.40 183.5V207.8M871.40 213V262M871.40 267V297.8M877.60 183.5V207.8M877.60 213V262M877.60 267V297.8M883.80 183.5V207.8M883.80 213V262M883.80 267V297.8M890.00 183.5V207.8M890.00 213V262M890.00 267V297.8M1045.40 189.3V234.8M1045.40 239.8V292.2M1051.60 189.3V234.8M1051.60 239.8V292.2M1057.80 189.3V234.8M1057.80 239.8V292.2M1064.00 189.3V234.8M1064.00 239.8V292.2M1070.20 189.3V234.8M1070.20 239.8V292.2M1076.40 189.3V234.8M1076.40 239.8V292.2M1082.60 189.3V234.8M1082.60 239.8V292.2M1088.80 189.3V234.8M1088.80 239.8V292.2M1048.50 183.5V207.8M1048.50 213V262M1048.50 267V297.8M1054.70 183.5V207.8M1054.70 213V262M1054.70 267V297.8M1060.90 183.5V207.8M1060.90 213V262M1060.90 267V297.8M1067.10 183.5V207.8M1067.10 213V262M1067.10 267V297.8M1073.30 183.5V207.8M1073.30 213V262M1073.30 267V297.8M1079.50 183.5V207.8M1079.50 213V262M1079.50 267V297.8M1085.70 183.5V207.8M1085.70 213V262M1085.70 267V297.8" stroke="#111" stroke-width="1.7" fill="none"/>
<rect x="216" y="179" width="10" height="10" fill="#1ed41e"/>
<path d="M376.7 309.7H430.5V303.8H475.3V309.7H528.5A26 26 0 0 1 554.5 335.7V393H562.0V437H554.5V494H562.0V538H554.5V595.5A26 26 0 0 1 528.5 621.5H475.3V628H430.5V621.5H376.7A26 26 0 0 1 350.7 595.5V552.5H344.2V508.5H350.7V422.5H344.2V378.5H350.7V335.7A26 26 0 0 1 376.7 309.7Z" fill="none" stroke="#111" stroke-width="1.6"/>
<path d="M596.9 309.7H650.7V303.8H695.5V309.7H748.7A26 26 0 0 1 774.7 335.7V393H782.2V437H774.7V494H782.2V538H774.7V595.5A26 26 0 0 1 748.7 621.5H695.5V628H650.7V621.5H596.9A26 26 0 0 1 570.9 595.5V552.5H564.4V508.5H570.9V422.5H564.4V378.5H570.9V335.7A26 26 0 0 1 596.9 309.7Z" fill="none" stroke="#111" stroke-width="1.6"/>
<path d="M817.0999999999999 309.7H870.9V303.8H915.7V309.7H968.9A26 26 0 0 1 994.9 335.7V393H1002.4V437H994.9V494H1002.4V538H994.9V595.5A26 26 0 0 1 968.9 621.5H915.7V628H870.9V621.5H817.0999999999999A26 26 0 0 1 791.0999999999999 595.5V552.5H784.5999999999999V508.5H791.0999999999999V422.5H784.5999999999999V378.5H791.0999999999999V335.7A26 26 0 0 1 817.0999999999999 309.7Z" fill="none" stroke="#111" stroke-width="1.6"/>
<path d="M1037.3 309.7H1091.1V303.8H1135.9V309.7H1189.1A26 26 0 0 1 1215.1 335.7V393H1222.6V437H1215.1V494H1222.6V538H1215.1V595.5A26 26 0 0 1 1189.1 621.5H1135.9V628H1091.1V621.5H1037.3A26 26 0 0 1 1011.3 595.5V552.5H1004.8V508.5H1011.3V422.5H1004.8V378.5H1011.3V335.7A26 26 0 0 1 1037.3 309.7Z" fill="none" stroke="#111" stroke-width="1.6"/>
<rect x="350.7" y="387.4" width="36.7" height="52.8" fill="none" stroke="#111" stroke-width="1.6"/>
<g fill="none" stroke="#dc4a3f" stroke-width="1.4"><circle cx="369.1" cy="339.1" r="3.2"/><circle cx="436.5" cy="357.9" r="3.2"/><circle cx="464.7" cy="359.2" r="2.3"/><circle cx="417.1" cy="376.5" r="2.6"/><circle cx="394.6" cy="381.8" r="2.2"/><circle cx="431.2" cy="381.2" r="2.3"/><circle cx="420.9" cy="390.6" r="2.5"/><circle cx="373.8" cy="391.5" r="3"/><circle cx="399.4" cy="397.3" r="2.3"/><circle cx="413.5" cy="402" r="2.3"/><circle cx="430" cy="399" r="2.5"/><circle cx="450" cy="400.3" r="2.3"/><circle cx="354.4" cy="403.5" r="2.8"/><circle cx="417.1" cy="426.2" r="2"/><circle cx="454.1" cy="449.2" r="2.5"/><circle cx="474.9" cy="314.1" r="2.2"/><circle cx="354.8" cy="460.2" r="4"/><circle cx="358" cy="474.3" r="4"/><circle cx="352.8" cy="487" r="3.5"/><circle cx="370.6" cy="458.5" r="4.5"/><circle cx="366.4" cy="491.3" r="2.3"/><circle cx="435.9" cy="541.4" r="2.3"/><circle cx="435.9" cy="550.4" r="2.3"/><circle cx="448.2" cy="564" r="5.8"/><circle cx="470.6" cy="568.5" r="3.5"/><circle cx="447.5" cy="578.9" r="2.8"/><circle cx="457.6" cy="577.6" r="3.2"/><circle cx="426.8" cy="586.6" r="2.6"/><circle cx="432.6" cy="596.4" r="4.5"/><circle cx="457.9" cy="597.6" r="3.6"/><circle cx="481.2" cy="585.4" r="3.5"/><circle cx="477.3" cy="600.9" r="2.6"/><circle cx="494.8" cy="594.4" r="2.8"/><circle cx="433.9" cy="611.9" r="4.1"/><circle cx="514.2" cy="598.3" r="6.5"/><circle cx="518.7" cy="579.5" r="2.8"/><circle cx="505.8" cy="617.7" r="3.5"/><circle cx="475.4" cy="557.5" r="2.3"/></g>
<g fill="none" stroke="#dc4a3f" stroke-width="1.3"><path d="M351 342C356 330 362 318 366.5 311"/><path d="M351 443C362 447 367 457 367 467C367 478 361 488 351 491"/><path d="M350.6 498.1C360 500 370 508 376 529C380 545 379 560 383 575C388 590 402 598 422 599"/><path d="M350.6 518.2C362 520 371 530 374 551C377 570 376 588 386 603C395 614 405 617 412 619"/><path d="M350.6 524.9C358 530 364 540 367 562C369 580 368 600 374 619"/><path d="M350.6 556.2C352 575 353 600 358.4 619"/><path d="M422.9 619.7C422 605 421 592 423 584C425 577 430 576 434 579C437 582 440 587 441 586C440 575 440 562 443 555C446 549 451 549 455 552C460 556 463 568 467 579C469 584 471 585 474 579C477 573 481 570 485 571C490 574 491 583 490 590C489 600 483 610 478.6 619.7"/><path d="M478.6 619.7C490 618 500 612 505 600C509 592 510 586 516 584.7C522 584 527 588 530 596C533 604 536 613 538.1 619.7"/></g>
<path d="M474.3 554.3L477.3 545.9L489.6 537.5L484.4 546.5L506.4 545.2L486.4 551.7L494.1 561.4L497.4 571.8L487.6 565.3L479.9 556.2L472.1 557.5Z" fill="none" stroke="#dc4a3f" stroke-width="1.3" stroke-linejoin="round"/>
<path d="M521.6 342.7L521.6 338.7M524.5 343.8L527.1 340.7M526.0 346.4L530.0 345.7M525.5 349.4L529.0 351.4M523.1 351.4L524.5 355.2M520.1 351.4L518.7 355.2M517.7 349.4L514.2 351.4M517.2 346.4L513.2 345.7M518.7 343.8L516.1 340.7" stroke="#dc4a3f" stroke-width="2.6" stroke-linecap="round"/><g fill="#dc4a3f"><circle cx="521.6" cy="338.7" r="1.8"/><circle cx="527.1" cy="340.7" r="1.8"/><circle cx="530.0" cy="345.7" r="1.8"/><circle cx="529.0" cy="351.4" r="1.8"/><circle cx="524.5" cy="355.2" r="1.8"/><circle cx="518.7" cy="355.2" r="1.8"/><circle cx="514.2" cy="351.4" r="1.8"/><circle cx="513.2" cy="345.7" r="1.8"/><circle cx="516.1" cy="340.7" r="1.8"/></g>
<circle cx="521.6" cy="347.2" r="4.2" fill="none" stroke="#dc4a3f" stroke-width="2.2"/>
<path d="M510.5 384.6Q512.0 384.3 514.9 380.5M510.1 386.4Q511.8 386.9 516.3 384.6M508.9 387.9Q510.8 389.7 516.5 389.5M507.2 388.7Q508.4 392.2 514.5 394.9M505.4 388.7Q504.7 393.6 509.7 399.5M503.7 387.9Q500.3 393.0 502.5 401.4M502.5 386.4Q496.5 389.9 494.8 399.1M502.1 384.6Q494.9 385.2 489.2 392.9M502.5 382.8Q496.1 380.3 487.8 384.6M503.7 381.3Q499.5 376.9 490.8 377.2M505.4 380.5Q503.8 375.8 496.7 372.6M507.2 380.5Q507.7 376.8 503.3 371.7M508.9 381.3Q510.3 379.1 508.8 373.6M510.1 382.8Q511.6 381.7 512.5 376.8" fill="none" stroke="#dc4a3f" stroke-width="2.1" stroke-linecap="round"/><g fill="#dc4a3f"><circle cx="514.9" cy="380.5" r="1.5"/><circle cx="516.5" cy="389.5" r="1.5"/><circle cx="509.7" cy="399.5" r="1.5"/><circle cx="494.8" cy="399.1" r="1.5"/><circle cx="487.8" cy="384.6" r="1.5"/><circle cx="496.7" cy="372.6" r="1.5"/><circle cx="508.8" cy="373.6" r="1.5"/></g>
<path d="M668.5 325.4H739.7A20 20 0 0 1 759.7 345.4V586.7A20 20 0 0 1 739.7 606.7H668L674 592.7M614 593.5L609.5 601L602 604.7C595 606 586.5 600 586.5 586V345.4C586.5 335 592 326 601.8 325.4C606 326 609 331 612 336L616.6 342.9M677 342.4L668.5 325.4" fill="none" stroke="#111" stroke-width="1.6"/>
<path d="M616.6 342.8H595.5V592.7H614M674 592.7H752V342.8H677" fill="none" stroke="#111" stroke-width="1.6"/>
<rect x="619.7" y="366.3" width="108.1" height="202.9" fill="none" stroke="#111" stroke-width="1.6"/>
<g fill="none" stroke="#dc4a3f" stroke-width="1.45"><rect x="597.7" y="345.0" width="152.1" height="245.5"/><rect x="603.0" y="350.3" width="141.5" height="234.9"/><rect x="611.3" y="358.6" width="124.9" height="218.3"/></g>
<path d="M636 366.3A6 5.5 0 0 0 647.5 368.5A6 5.5 0 0 0 659.5 368.5A6 5.5 0 0 0 671.5 366.3M636 569.2A6 5.5 0 0 1 647.5 567A6 5.5 0 0 1 659.5 567A6 5.5 0 0 1 671.5 569.2" fill="#fff" stroke="#111" stroke-width="1.6"/>
<path d="M655.5 311.5C660 315 664 319 668.5 325.4L677 342.4C682 345 688 346 692.5 350C694 355 692 360 684.4 362.5C679 363 675 362 670.6 360.4C665 358 662 355 656 354C648 352.5 636 350 626 347C620 343 617 339 615.5 335Z" fill="#fff" stroke="none"/>
<path d="M650.5 308C656 311 663 318 668.5 325.4C672 331 674 337 677 342.4C682 345 688 346 692.5 350C694 355 692 360 684.4 362.5C679 363 675 362 670.6 360.4C665 358 662 355 656 354C648 352.5 636 350 626 347C620 343 617 339 615.5 335" fill="none" stroke="#dc4a3f" stroke-width="1.3"/>
<path d="M579 317.5L601.8 325.4M663.5 324.5L664.5 335M662 336C666 339 670 340 673 340.5M660 340L656 346M673 341L678 350M676 341L681 351" fill="none" stroke="#dc4a3f" stroke-width="1.1"/>
<ellipse cx="687.5" cy="352.6" rx="4.8" ry="4.2" fill="none" stroke="#dc4a3f" stroke-width="1.3"/>
<path d="M614 596.5C620 590 628 586 640 581C650 578 660 575 670 572C678 570 686 569 690 571C694 574 693 580 690 583C686 586 682 588 678 589L674 592.7C671 598 668 603 665 608.5C661 614 658 618 656 622L650 622L640 606Z" fill="#fff" stroke="none"/>
<path d="M614 596.5C620 590 628 586 640 581C650 578 660 575 670 572C678 570 686 569 690 571C694 574 693 580 690 583C686 586 682 588 678 589L674 592.7C671 598 668 603 665 608.5C661 614 658 618 656 622" fill="none" stroke="#dc4a3f" stroke-width="1.3"/>
<path d="M576.5 613L602 604.7M670 578L673 586M667 580L670 589M640 593L643 599M660 606L668 600" fill="none" stroke="#dc4a3f" stroke-width="1.1"/>
<ellipse cx="688" cy="578.5" rx="4.8" ry="4.2" fill="none" stroke="#dc4a3f" stroke-width="1.3"/>
<text x="579" y="419.5" font-size="11" font-weight="bold" fill="#dc4a3f" stroke="#dc4a3f" stroke-width="0.7" text-anchor="middle">逢</text>
<text x="579" y="433" font-size="11" font-weight="bold" fill="#dc4a3f" stroke="#dc4a3f" stroke-width="0.7" text-anchor="middle">福</text>
<text x="579" y="446" font-size="11" font-weight="bold" fill="#dc4a3f" stroke="#dc4a3f" stroke-width="0.7" text-anchor="middle">田</text>
<text x="579" y="460.2" font-size="11" font-weight="bold" fill="#dc4a3f" stroke="#dc4a3f" stroke-width="0.7" text-anchor="middle">博</text>
<text x="579" y="481.5" font-size="11" font-weight="bold" fill="#dc4a3f" stroke="#dc4a3f" stroke-width="0.7" text-anchor="middle">凯</text>
<text x="579" y="494.3" font-size="11" font-weight="bold" fill="#dc4a3f" stroke="#dc4a3f" stroke-width="0.7" text-anchor="middle">旋</text>
<text x="579" y="508" font-size="11" font-weight="bold" fill="#dc4a3f" stroke="#dc4a3f" stroke-width="0.7" text-anchor="middle">道</text>
<text x="579" y="521" font-size="11" font-weight="bold" fill="#dc4a3f" stroke="#dc4a3f" stroke-width="0.7" text-anchor="middle">畅</text>
<path d="M826.7 325.9H959.9A20 20 0 0 1 979.9 345.9V586.7A20 20 0 0 1 959.9 606.7H825.4V541.5L824.5 520L825.4 513.3V482.2H879M848.7 456.3H833L830.8 454V421.6H835.3V359H816.3V344.5H806.5C807 335 815 326 826.7 325.9M848.7 456.3V448L858.2 435.6" fill="none" stroke="#111" stroke-width="1.6"/>
<path d="M857.1 431.5L874.1 425L888.8 467.9L885 470L883 481L866 482L857.1 431.5Z" fill="#fff" stroke="none"/>
<path d="M857.1 431.5L874.1 425L888.8 467.9" fill="none" stroke="#111" stroke-width="1.6"/>
<path d="M872.7 427.6L886.9 469.2M870.5 428.4L884.3 468.6M868.3 429.1L881.6 467.9M866.1 429.8L878.9 467.2M864.0 430.6L876.3 466.5M861.8 431.3L873.6 465.9M857.1 431.5L876 481" fill="none" stroke="#dc4a3f" stroke-width="1.2"/>
<path d="M885 468L897 470L900.6 475L895 478.5L886 477ZM880 481L892 484L895.9 495L889 493L882 487Z" fill="#dc4a3f"/>
<path d="M879.4 482L885.3 490.3M888 478L893 486" stroke="#111" stroke-width="1.4"/>
<rect x="892.4" y="459.7" width="3.5" height="15.3" rx="1.5" fill="#777" stroke="#111" stroke-width="0.9"/><rect x="891.2" y="488" width="3.5" height="16.4" rx="1.5" fill="#777" stroke="#111" stroke-width="0.9"/>
<path d="M833.5 480.9C836 478 838 477 839.4 476.2C842 472 845 467 847.6 465.6C855 464 863 464 871.2 464.4M846 471.5C853 469 862 468 872 468.5M848 476C856 474 864 473.5 874 474.5M858.2 447C864 446.5 868 447 873 448" fill="none" stroke="#dc4a3f" stroke-width="1.2"/>
<path d="M792.2 344.5V462M803.5 344.5V462M814.8 344.5V462M826.1 359V462M835.3 359V421.6M830.8 421.6V454M792.2 345.0H815.8M791.7 475C800 471 810 466 815.8 462.7M826.1 462V481.5M785 359.2H835.5M791.7 475C800 471 810 466 815.8 462.7M826.1 462V481.5M785 369.6H835.5M791.7 475C800 471 810 466 815.8 462.7M826.1 462V481.5M785 379.9H835.5M791.7 475C800 471 810 466 815.8 462.7M826.1 462V481.5M785 390.2H835.5M791.7 475C800 471 810 466 815.8 462.7M826.1 462V481.5M785 400.6H835.5M791.7 475C800 471 810 466 815.8 462.7M826.1 462V481.5M785 410.9H835.5M791.7 475C800 471 810 466 815.8 462.7M826.1 462V481.5M785 421.3H835.5M791.7 475C800 471 810 466 815.8 462.7M826.1 462V481.5M792.2 431.6H830.8M791.7 475C800 471 810 466 815.8 462.7M826.1 462V481.5M792.2 442.0H830.8M791.7 475C800 471 810 466 815.8 462.7M826.1 462V481.5M792.2 452.3H830.8M791.7 475C800 471 810 466 815.8 462.7M826.1 462V481.5M792.2 462.7H830.8M791.7 475C800 471 810 466 815.8 462.7M826.1 462V481.5M800.7 481V609M805.4 481V620.6M825.2 605V620.6M786.6 519H796V530.2H786.6ZM825.2 543.4H810Q805.8 543.4 805.8 548V576.5Q805.8 581 810 581H825.2M800.7 519C805 516 815 514.5 825.2 514M806.4 537C812 536 818 535.5 825.2 535.5M800.7 541.5C800.7 560 800.7 575 802 583C804 586 810 587 825.2 589M791.3 481H826" fill="none" stroke="#dc4a3f" stroke-width="1.1"/>
<path d="M825.4 545.5L871.5 547.5L825.4 549.5Z" fill="#fff" stroke="#111" stroke-width="1.3"/>
<rect x="837.5" y="537.7" width="4.5" height="20.7" fill="#f0c8c0" stroke="#111" stroke-width="1.1"/>
<rect x="826" y="543.5" width="11" height="7" fill="#f0c8c0" stroke="#dc4a3f" stroke-width="0.8"/>
<path d="M1046.9 325.9H1180.1A20 20 0 0 1 1200.1 345.9V586.7A20 20 0 0 1 1180.1 606.7H1046.9A20 20 0 0 1 1026.9 586.7V573.6H1031.3V569.7H1035.3V567H1039.7V565.3H1099V556.9H1034.4L1036.2 554.2V548H1038.4V542H1040.5V523.1H1161.2V513.7H1163.4V416.4H1161.2V407.9H1040.5V389H1038.4V383H1036.2V376.8L1034.4 374.1H1099V365.7H1039.7V364H1035.3V361.3H1031.3V357.4H1026.9V345.9A20 20 0 0 1 1046.9 325.9Z" fill="none" stroke="#111" stroke-width="1.6"/>
<defs><pattern id="pd" x="1040.5" y="413.4" width="3.3" height="3.25" patternUnits="userSpaceOnUse"><rect width="3.3" height="3.25" fill="#dc4a3f"/><rect x="0.8" y="0.75" width="1.8" height="1.9" fill="#fff"/></pattern><pattern id="ph" x="1121.2" y="413.4" width="5" height="3.2" patternUnits="userSpaceOnUse"><rect width="5" height="3.2" fill="#dc4a3f"/><rect x="0.5" y="0.9" width="4" height="1.5" fill="#fff"/></pattern></defs>
<rect x="1040.5" y="413.4" width="80.7" height="106" fill="url(#pd)"/>
<rect x="1121.2" y="413.4" width="35.5" height="106" fill="url(#ph)"/>
<g fill="#fff"><rect x="1041.3" y="427.6" width="1.8" height="6"/><rect x="1041.3" y="498.2" width="1.8" height="6.5"/><rect x="1044.6" y="427.6" width="1.8" height="6"/><rect x="1044.6" y="498.2" width="1.8" height="6.5"/><rect x="1047.9" y="427.6" width="1.8" height="6"/><rect x="1047.9" y="498.2" width="1.8" height="6.5"/><rect x="1051.2" y="427.6" width="1.8" height="6"/><rect x="1051.2" y="498.2" width="1.8" height="6.5"/><rect x="1054.5" y="427.6" width="1.8" height="6"/><rect x="1054.5" y="498.2" width="1.8" height="6.5"/><rect x="1057.8" y="427.6" width="1.8" height="6"/><rect x="1057.8" y="498.2" width="1.8" height="6.5"/><rect x="1061.1" y="427.6" width="1.8" height="6"/><rect x="1061.1" y="498.2" width="1.8" height="6.5"/><rect x="1064.4" y="427.6" width="1.8" height="6"/><rect x="1064.4" y="498.2" width="1.8" height="6.5"/><rect x="1067.7" y="427.6" width="1.8" height="6"/><rect x="1067.7" y="498.2" width="1.8" height="6.5"/><rect x="1071.0" y="427.6" width="1.8" height="6"/><rect x="1071.0" y="498.2" width="1.8" height="6.5"/><rect x="1074.3" y="427.6" width="1.8" height="6"/><rect x="1074.3" y="498.2" width="1.8" height="6.5"/><rect x="1077.6" y="427.6" width="1.8" height="6"/><rect x="1077.6" y="498.2" width="1.8" height="6.5"/><rect x="1080.9" y="427.6" width="1.8" height="6"/><rect x="1080.9" y="498.2" width="1.8" height="6.5"/><rect x="1084.2" y="427.6" width="1.8" height="6"/><rect x="1084.2" y="498.2" width="1.8" height="6.5"/><rect x="1087.5" y="427.6" width="1.8" height="6"/><rect x="1087.5" y="498.2" width="1.8" height="6.5"/><rect x="1090.8" y="427.6" width="1.8" height="6"/><rect x="1090.8" y="498.2" width="1.8" height="6.5"/><rect x="1094.1" y="427.6" width="1.8" height="6"/><rect x="1094.1" y="498.2" width="1.8" height="6.5"/><rect x="1097.4" y="427.6" width="1.8" height="6"/><rect x="1097.4" y="498.2" width="1.8" height="6.5"/><rect x="1100.7" y="427.6" width="1.8" height="6"/><rect x="1100.7" y="498.2" width="1.8" height="6.5"/><rect x="1104.0" y="427.6" width="1.8" height="6"/><rect x="1104.0" y="498.2" width="1.8" height="6.5"/><rect x="1107.3" y="427.6" width="1.8" height="6"/><rect x="1107.3" y="498.2" width="1.8" height="6.5"/><rect x="1110.6" y="427.6" width="1.8" height="6"/><rect x="1110.6" y="498.2" width="1.8" height="6.5"/><rect x="1113.9" y="427.6" width="1.8" height="6"/><rect x="1113.9" y="498.2" width="1.8" height="6.5"/><rect x="1117.2" y="427.6" width="1.8" height="6"/><rect x="1117.2" y="498.2" width="1.8" height="6.5"/></g>
<path d="M1136 413.4V519.4M1139.8 413.4V519.4M1146.5 413.4V519.4" stroke="#dc4a3f" stroke-width="1"/>
<rect x="1041" y="439" width="80" height="52.8" fill="#fff"/>
<path d="M1040.5 439V491.8H1121V439" fill="none" stroke="#111" stroke-width="1.6"/>
<rect x="1127.8" y="426.8" width="6.1" height="14.2" fill="#fff" stroke="#dc4a3f" stroke-width="0.8"/>
<rect x="1127.8" y="447" width="6.1" height="14.3" fill="#fff" stroke="#dc4a3f" stroke-width="0.8"/>
<rect x="1127.8" y="467.4" width="6.1" height="16.2" fill="#fff" stroke="#dc4a3f" stroke-width="0.8"/>
<rect x="1127.8" y="487.7" width="6.1" height="14.2" fill="#fff" stroke="#dc4a3f" stroke-width="0.8"/>
<path d="M1034.4 375.5L1036.2 377.5V383H1038.4V389H1040.5V542H1038.4V548H1036.2V554.2L1034.4 556Z" fill="#dc4a3f"/>
<path d="M1032 360V570M1159 416V516M1161.2 416V516" stroke="#dc4a3f" stroke-width="1"/>
<rect x="1076.5" y="365.5" width="22.5" height="8.5" fill="#dc4a3f"/>
<rect x="1080.0" y="368.3" width="1.8" height="2.8" fill="#fff"/>
<rect x="1083.9" y="368.3" width="1.8" height="2.8" fill="#fff"/>
<rect x="1087.8" y="368.3" width="1.8" height="2.8" fill="#fff"/>
<rect x="1091.7" y="368.3" width="1.8" height="2.8" fill="#fff"/>
<rect x="1095.6" y="368.3" width="1.8" height="2.8" fill="#fff"/>
<rect x="1076.5" y="557.5" width="22.5" height="8.5" fill="#dc4a3f"/>
<rect x="1080.0" y="560.3" width="1.8" height="2.8" fill="#fff"/>
<rect x="1083.9" y="560.3" width="1.8" height="2.8" fill="#fff"/>
<rect x="1087.8" y="560.3" width="1.8" height="2.8" fill="#fff"/>
<rect x="1091.7" y="560.3" width="1.8" height="2.8" fill="#fff"/>
<rect x="1095.6" y="560.3" width="1.8" height="2.8" fill="#fff"/>
<rect x="1058" y="370" width="19" height="4" fill="#dc4a3f"/><rect x="1058" y="557.5" width="19" height="4" fill="#dc4a3f"/>
</svg>
<div class="a" style="left:1369px;top:37.5px;width:231px;height:392px;background:#fff;border-radius:8px 0 0 8px"></div>
<svg class="a" style="left:1423px;top:44px" width="21" height="18" viewBox="0 0 21 18"><rect x="1.5" y="1.5" width="17" height="14.5" fill="none" stroke="#1a7fc5" stroke-width="2.6"/><path d="M4 12.5L8.5 8L11 10.5L16.5 5" fill="none" stroke="#1a7fc5" stroke-width="2"/><circle cx="6" cy="5.5" r="1.4" fill="#1a7fc5"/></svg>
<div class="a" style="left:1417px;top:65px;width:33px;height:2.4px;background:#1a7fc5"></div>
<svg class="a" style="left:1514px;top:44px" width="23" height="19" viewBox="0 0 23 19"><path d="M2 6.5C2 5.5 2.8 4.7 3.8 4.7H7L8.8 2H14.2L16 4.7H19.2C20.2 4.7 21 5.5 21 6.5V16C21 17 20.2 17.8 19.2 17.8H3.8C2.8 17.8 2 17 2 16Z" fill="none" stroke="#8a8a8a" stroke-width="2" stroke-linejoin="round"/><circle cx="11.5" cy="11" r="1.8" fill="none" stroke="#8a8a8a" stroke-width="1.8"/></svg>
<div class="dd" style="left:1373.5px;top:85.5px;width:83px;height:21px">1.基础图案</div>
<svg class="a" style="left:1445px;top:94px" width="8" height="5" viewBox="0 0 8 5"><path d="M0 0H8L4 4.5Z" fill="#111"/></svg>
<div class="dd" style="left:1462px;top:85.5px;width:92px;height:21px">1.基本图形</div>
<svg class="a" style="left:1541px;top:94px" width="8" height="5" viewBox="0 0 8 5"><path d="M0 0H8L4 4.5Z" fill="#111"/></svg>
<svg class="a" style="left:1566px;top:88px" width="17" height="17" viewBox="0 0 17 17"><circle cx="7.5" cy="7.5" r="5.5" fill="none" stroke="#999" stroke-width="2"/><path d="M11.5 11.5L15.5 15.5" stroke="#999" stroke-width="2.2"/></svg>
<div class="a" style="left:1587px;top:111.8px;width:4px;height:137px;background:#d4d4d4;border-radius:2px"></div>
<div class="a" style="left:1514.6px;top:190.4px;width:61px;height:77px;border:1px solid #e3eef7;background:#fbfdff"></div>
<div class="a" style="left:1514.6px;top:249.6px;width:61px;height:17.5px;background:#dcebf8"></div>
<svg class="a" style="left:0;top:0" width="1600" height="850"><g fill="none" stroke="#555" stroke-width="1.3" stroke-linejoin="miter"><path d="M1380.7 127.3H1408.8V114.7L1435 140.9L1408.8 168.1V155.5H1380.7Z"/><path d="M1449.6 127.3H1494.2L1503.9 140.9L1494.2 155.5H1449.6Z"/><path d="M1518.5 124.4H1558.3L1571.9 140.9L1558.3 157.4H1518.5L1531.1 140.9Z"/><circle cx="1407.8" cy="219.5" r="27.2"/><circle cx="1407.8" cy="219.5" r="16.5"/><path d="M1463.2 192.3H1490.3V205.9H1503.9V233.1H1490.3V246.7H1463.2V233.1H1449.6V205.9H1463.2Z"/><path d="M1544.7 192.3L1554.7 202.5L1549.2 202.5L1549.2 215.0L1561.7 215.0L1561.7 209.5L1571.9 219.5L1561.7 229.5L1561.7 224.0L1549.2 224.0L1549.2 236.5L1554.7 236.5L1544.7 246.7L1534.7 236.5L1540.2 236.5L1540.2 224.0L1527.7 224.0L1527.7 229.5L1517.5 219.5L1527.7 209.5L1527.7 215.0L1540.2 215.0L1540.2 202.5L1534.7 202.5Z"/><path d="M1379.2 297.7L1391.2 285.7L1391.2 292.7L1425.2 292.7L1425.2 285.7L1437.2 297.7L1425.2 309.7L1425.2 302.7L1391.2 302.7L1391.2 309.7Z"/><path d="M1476.3 271.5L1483.1 290.2L1502.9 290.8L1487.2 303.1L1492.8 322.2L1476.3 311.0L1459.8 322.2L1465.4 303.1L1449.7 290.8L1469.5 290.2Z"/><path d="M1544.5 324C1535 316 1517 303 1517 287C1517 277 1524 271 1531 271C1537 271 1542 274 1544.5 279C1547 274 1552 271 1558 271C1565 271 1572.3 277 1572.3 287C1572.3 303 1554 316 1544.5 324Z"/><path d="M1406.7 377.2L1406.6 377.1L1406.6 377.1L1406.5 377.0L1406.4 376.9L1406.4 376.9L1406.3 376.8L1406.3 376.7L1406.3 376.6L1406.2 376.5L1406.2 376.4L1406.2 376.3L1406.1 376.2L1406.1 376.2L1406.1 376.0L1406.1 375.9L1406.1 375.8L1406.1 375.7L1406.1 375.6L1406.1 375.5L1406.1 375.4L1406.2 375.3L1406.2 375.2L1406.2 375.1L1406.3 375.0L1406.3 374.8L1406.4 374.7L1406.5 374.6L1406.5 374.5L1406.6 374.4L1406.7 374.3L1406.8 374.2L1406.9 374.1L1407.0 374.0L1407.1 373.9L1407.2 373.9L1407.3 373.8L1407.4 373.7L1407.6 373.6L1407.7 373.6L1407.8 373.5L1408.0 373.5L1408.1 373.4L1408.3 373.4L1408.4 373.3L1408.6 373.3L1408.7 373.3L1408.9 373.3L1409.1 373.3L1409.2 373.3L1409.4 373.3L1409.6 373.3L1409.7 373.4L1409.9 373.4L1410.1 373.5L1410.2 373.5L1410.4 373.6L1410.6 373.7L1410.7 373.7L1410.9 373.8L1411.1 373.9L1411.2 374.0L1411.4 374.2L1411.5 374.3L1411.6 374.4L1411.8 374.5L1411.9 374.7L1412.0 374.9L1412.2 375.0L1412.3 375.2L1412.4 375.4L1412.5 375.5L1412.6 375.7L1412.6 375.9L1412.7 376.1L1412.8 376.3L1412.8 376.5L1412.9 376.8L1412.9 377.0L1412.9 377.2L1412.9 377.4L1413.0 377.6L1412.9 377.9L1412.9 378.1L1412.9 378.3L1412.9 378.6L1412.8 378.8L1412.8 379.0L1412.7 379.2L1412.6 379.5L1412.5 379.7L1412.4 379.9L1412.3 380.1L1412.2 380.3L1412.0 380.6L1411.9 380.8L1411.7 381.0L1411.5 381.1L1411.4 381.3L1411.2 381.5L1411.0 381.7L1410.8 381.8L1410.6 382.0L1410.3 382.1L1410.1 382.3L1409.9 382.4L1409.6 382.5L1409.4 382.6L1409.1 382.7L1408.8 382.8L1408.6 382.9L1408.3 382.9L1408.0 383.0L1407.7 383.0L1407.4 383.0L1407.1 383.0L1406.8 383.0L1406.5 383.0L1406.3 382.9L1406.0 382.9L1405.7 382.8L1405.4 382.8L1405.1 382.7L1404.8 382.6L1404.5 382.4L1404.2 382.3L1404.0 382.2L1403.7 382.0L1403.4 381.8L1403.2 381.7L1402.9 381.5L1402.7 381.2L1402.5 381.0L1402.2 380.8L1402.0 380.5L1401.8 380.3L1401.6 380.0L1401.4 379.7L1401.3 379.5L1401.1 379.2L1401.0 378.9L1400.8 378.5L1400.7 378.2L1400.6 377.9L1400.5 377.6L1400.5 377.2L1400.4 376.9L1400.4 376.5L1400.3 376.2L1400.3 375.8L1400.3 375.5L1400.3 375.1L1400.4 374.8L1400.4 374.4L1400.5 374.0L1400.6 373.7L1400.7 373.3L1400.8 373.0L1401.0 372.6L1401.1 372.3L1401.3 372.0L1401.5 371.6L1401.7 371.3L1401.9 371.0L1402.1 370.7L1402.4 370.4L1402.6 370.1L1402.9 369.8L1403.2 369.6L1403.5 369.3L1403.8 369.1L1404.1 368.9L1404.5 368.7L1404.8 368.5L1405.2 368.3L1405.6 368.1L1405.9 368.0L1406.3 367.9L1406.7 367.7L1407.1 367.6L1407.5 367.6L1407.9 367.5L1408.4 367.5L1408.8 367.4L1409.2 367.4L1409.6 367.5L1410.0 367.5L1410.5 367.6L1410.9 367.6L1411.3 367.7L1411.7 367.8L1412.1 368.0L1412.5 368.1L1412.9 368.3L1413.3 368.5L1413.7 368.7L1414.1 368.9L1414.5 369.2L1414.8 369.4L1415.2 369.7L1415.5 370.0L1415.9 370.3L1416.2 370.7L1416.5 371.0L1416.8 371.4L1417.0 371.7L1417.3 372.1L1417.5 372.5L1417.7 372.9L1417.9 373.4L1418.1 373.8L1418.3 374.2L1418.4 374.7L1418.5 375.1L1418.6 375.6L1418.7 376.1L1418.8 376.6L1418.8 377.0L1418.8 377.5L1418.8 378.0L1418.8 378.5L1418.7 379.0L1418.7 379.5L1418.6 380.0L1418.5 380.5L1418.3 380.9L1418.2 381.4L1418.0 381.9L1417.8 382.3L1417.5 382.8L1417.3 383.2L1417.0 383.7L1416.7 384.1L1416.4 384.5L1416.1 384.9L1415.7 385.3L1415.4 385.6L1415.0 386.0L1414.6 386.3L1414.2 386.7L1413.7 387.0L1413.3 387.2L1412.8 387.5L1412.4 387.7L1411.9 388.0L1411.4 388.2L1410.9 388.3L1410.3 388.5L1409.8 388.6L1409.3 388.7L1408.7 388.8L1408.2 388.9L1407.6 388.9L1407.1 388.9L1406.5 388.9L1406.0 388.9L1405.4 388.8L1404.9 388.7L1404.3 388.6L1403.8 388.4L1403.2 388.3L1402.7 388.1L1402.2 387.9L1401.7 387.6L1401.1 387.4L1400.7 387.1L1400.2 386.8L1399.7 386.4L1399.2 386.1L1398.8 385.7L1398.4 385.3L1398.0 384.9L1397.6 384.4L1397.2 384.0L1396.8 383.5L1396.5 383.0L1396.2 382.5L1395.9 382.0L1395.6 381.4L1395.4 380.9L1395.2 380.3L1395.0 379.7L1394.8 379.1L1394.7 378.5L1394.6 377.9L1394.5 377.3L1394.4 376.7L1394.4 376.1L1394.4 375.5L1394.4 374.9L1394.5 374.3L1394.6 373.6L1394.7 373.0L1394.8 372.4L1395.0 371.8L1395.2 371.2L1395.4 370.6L1395.7 370.0L1395.9 369.4L1396.2 368.9L1396.6 368.3L1396.9 367.8L1397.3 367.3L1397.7 366.8L1398.1 366.3L1398.6 365.8L1399.1 365.4L1399.6 364.9L1400.1 364.5L1400.6 364.1L1401.2 363.8L1401.7 363.4L1402.3 363.1L1402.9 362.8L1403.5 362.6L1404.2 362.3L1404.8 362.1L1405.5 362.0L1406.1 361.8L1406.8 361.7L1407.5 361.6L1408.1 361.6L1408.8 361.5L1409.5 361.5L1410.2 361.6L1410.9 361.6L1411.6 361.7L1412.3 361.9L1412.9 362.0L1413.6 362.2L1414.3 362.5L1414.9 362.7L1415.6 363.0L1416.2 363.3L1416.8 363.6L1417.4 364.0L1418.0 364.4L1418.6 364.8L1419.1 365.3L1419.7 365.8L1420.2 366.3L1420.7 366.8L1421.1 367.4L1421.6 367.9L1422.0 368.5L1422.4 369.1L1422.7 369.8L1423.1 370.4L1423.4 371.1L1423.7 371.8L1423.9 372.5L1424.1 373.2L1424.3 373.9L1424.5 374.6L1424.6 375.4L1424.7 376.1L1424.7 376.8L1424.7 377.6L1424.7 378.3L1424.7 379.1L1424.6 379.8L1424.5 380.6L1424.3 381.3L1424.1 382.1L1423.9 382.8L1423.7 383.5L1423.4 384.3L1423.1 385.0L1422.7 385.6L1422.3 386.3L1421.9 387.0L1421.5 387.6L1421.0 388.2L1420.5 388.8L1420.0 389.4L1419.4 390.0L1418.8 390.5L1418.2 391.0L1417.6 391.5L1417.0 391.9L1416.3 392.3L1415.6 392.7L1414.9 393.1L1414.1 393.4L1413.4 393.7L1412.6 394.0L1411.9 394.2L1411.1 394.4L1410.3 394.6L1409.5 394.7L1408.7 394.8L1407.9 394.8L1407.0 394.8L1406.2 394.8L1405.4 394.7L1404.6 394.6L1403.8 394.5L1403.0 394.3L1402.2 394.1L1401.4 393.9L1400.6 393.6L1399.8 393.3L1399.0 392.9L1398.3 392.5L1397.6 392.1L1396.9 391.7L1396.2 391.2L1395.5 390.7L1394.9 390.1L1394.2 389.5L1393.6 388.9L1393.1 388.3L1392.5 387.6L1392.0 386.9L1391.5 386.2L1391.1 385.5L1390.7 384.7L1390.3 383.9L1389.9 383.1L1389.6 382.3L1389.4 381.5L1389.1 380.7L1388.9 379.8L1388.8 379.0L1388.6 378.1L1388.5 377.2L1388.5 376.3L1388.5 375.4L1388.5 374.6L1388.6 373.7L1388.7 372.8L1388.9 371.9L1389.1 371.0L1389.3 370.2L1389.6 369.3L1389.9 368.5L1390.2 367.6L1390.6 366.8L1391.0 366.0L1391.5 365.2L1392.0 364.5L1392.5 363.7L1393.1 363.0L1393.7 362.3L1394.3 361.7L1395.0 361.0L1395.7 360.4L1396.4 359.9L1397.2 359.3L1397.9 358.8L1398.7 358.3L1399.6 357.9L1400.4 357.5L1401.3 357.1L1402.1 356.8L1403.0 356.5L1403.9 356.2L1404.8 356.0L1405.8 355.9L1406.7 355.7L1407.7 355.7L1408.6 355.6L1409.6 355.6L1410.5 355.7L1411.5 355.7L1412.4 355.9L1413.4 356.1L1414.3 356.3L1415.2 356.5L1416.1 356.8L1417.0 357.2L1417.9 357.6L1418.8 358.0L1419.7 358.4L1420.5 359.0L1421.3 359.5L1422.1 360.1L1422.9 360.7L1423.6 361.3L1424.3 362.0L1425.0 362.7L1425.6 363.5L1426.2 364.3L1426.8 365.1L1427.4 365.9L1427.9 366.8L1428.3 367.6L1428.7 368.6L1429.1 369.5L1429.5 370.4L1429.8 371.4L1430.0 372.3L1430.3 373.3L1430.4 374.3L1430.6 375.3L1430.6 376.3L1430.7 377.4L1430.7 378.4L1430.6 379.4L1430.5 380.4L1430.4 381.4L1430.2 382.4L1429.9 383.4L1429.6 384.4L1429.3 385.4L1428.9 386.4L1428.5 387.3L1428.0 388.2L1427.5 389.2L1427.0 390.0L1426.4 390.9L1425.8 391.7L1425.1 392.6L1424.4 393.3L1423.7 394.1L1422.9 394.8L1422.1 395.5L1421.3 396.1L1420.4 396.7L1419.5 397.3L1418.6 397.8L1417.6 398.3L1416.7 398.8L1415.7 399.2L1414.7 399.5L1413.7 399.9L1412.6 400.1L1411.6 400.3L1410.5 400.5L1409.4 400.6L1408.4 400.7L1407.3 400.8L1406.2 400.7L1405.1 400.7L1404.0 400.5L1402.9 400.4L1401.9 400.2L1400.8 399.9L1399.8 399.6L1398.7 399.2L1397.7 398.8L1396.7 398.4L1395.7 397.9L1394.7 397.3L1393.8 396.7L1392.9 396.1L1392.0 395.4L1391.1 394.7L1390.3 394.0L1389.5 393.2L1388.8 392.4L1388.0 391.5L1387.4 390.6L1386.7 389.7L1386.1 388.7L1385.6 387.7L1385.1 386.7L1384.6 385.7L1384.2 384.6L1383.8 383.6L1383.5 382.5L1383.2 381.4L1383.0 380.3L1382.8 379.1L1382.7 378.0L1382.6 376.8L1382.6 375.7L1382.6 374.5L1382.7 373.4L1382.8 372.2L1383.0 371.1L1383.2 370.0L1383.5 368.8L1383.9 367.7L1384.2 366.6L1384.7 365.5L1385.2 364.5L1385.7 363.4L1386.3 362.4L1386.9 361.4L1387.6 360.5L1388.3 359.5L1389.1 358.6L1389.9 357.8L1390.7 356.9L1391.6 356.1L1392.5 355.4L1393.5 354.7L1394.5 354.0L1395.5 353.4L1396.5 352.8L1397.6 352.2L1398.7 351.8L1399.8 351.3L1401.0 350.9L1402.1 350.6L1403.3 350.3L1404.5 350.1L1405.7 349.9L1406.9 349.8L1408.1 349.7"/><path d="M1476.4 349.4L1483.0 364.6L1499.4 362.7L1489.6 376.0L1499.4 389.3L1483.0 387.4L1476.4 402.6L1469.8 387.4L1453.4 389.3L1463.2 376.0L1453.4 362.7L1469.8 364.6Z"/><path d="M1536 351.6H1572.3L1554.7 400.4H1518Z"/></g></svg>
<div class="sl" style="left:1377.8px;top:176px">箭头</div>
<div class="sl" style="left:1446.8px;top:176px">箭头1</div>
<div class="sl" style="left:1514.7px;top:176px">箭头2</div>
<div class="sl" style="left:1377.8px;top:255px">同心圆</div>
<div class="sl" style="left:1446.8px;top:255px">十字</div>
<div class="sl" style="left:1514.7px;top:255px">十字箭头</div>
<div class="sl" style="left:1378px;top:333px">双箭头</div>
<div class="sl" style="left:1446.8px;top:333px">五角星</div>
<div class="sl" style="left:1514.7px;top:333px">心形</div>
<div class="sl" style="left:1378px;top:412px">螺旋线</div>
<div class="sl" style="left:1446.8px;top:412px">六角星</div>
<div class="sl" style="left:1514.7px;top:412px">平行四边形</div>
<div class="a" style="left:1369px;top:440px;width:231px;height:398px;background:#fff;border-radius:8px 0 0 8px"></div>
<div class="a" style="left:1375.6px;top:448px;width:218.4px;height:33px;background:#0d7acb;border-radius:3px 3px 0 0"></div>
<div class="th" style="left:1379.5px;top:458.5px">加工工艺</div>
<div class="th" style="left:1452px;top:458.5px">速度</div>
<div class="th" style="left:1509px;top:458.5px">功率</div>
<div class="th" style="left:1557.5px;top:458.5px">输出</div>
<div class="a" style="left:1375.6px;top:481px;width:218.4px;height:33px;background:#e7e7e7"></div>
<div class="a" style="left:1378px;top:491px;width:15px;height:14px;background:#000"></div>
<div class="td" style="left:1399.5px;top:491.5px;color:#111">切割</div>
<div class="td" style="left:1451.5px;top:491.5px;color:#7a7a7a;font-weight:normal">15.0</div>
<div class="td" style="left:1507.5px;top:491.5px;color:#7a7a7a;font-weight:normal">80.0</div>
<svg class="a" style="left:1561px;top:491px" width="20" height="14" viewBox="0 0 20 14"><path d="M1 7C4 2.5 7 1 10 1C13 1 16 2.5 19 7C16 11.5 13 13 10 13C7 13 4 11.5 1 7Z" fill="none" stroke="#111" stroke-width="1.6"/><circle cx="10" cy="7" r="3.2" fill="none" stroke="#111" stroke-width="1.6"/></svg>
<div class="a" style="left:1378px;top:524px;width:15px;height:14.5px;background:#e5453c"></div>
<div class="td" style="left:1399.5px;top:525px;color:#111">描线</div>
<div class="td" style="left:1448px;top:525px;color:#111">150.0</div>
<div class="td" style="left:1508.3px;top:525px;color:#111">12.0</div>
<svg class="a" style="left:1561px;top:524.5px" width="20" height="14" viewBox="0 0 20 14"><path d="M1 7C4 2.5 7 1 10 1C13 1 16 2.5 19 7C16 11.5 13 13 10 13C7 13 4 11.5 1 7Z" fill="none" stroke="#111" stroke-width="1.6"/><circle cx="10" cy="7" r="3.2" fill="none" stroke="#111" stroke-width="1.6"/></svg>
<div class="a" style="left:1426.5px;top:687px;width:107px;height:107px;border-radius:50%;border:5px solid #1a7fc5;background:#fff"></div>
<div class="a" style="left:1435px;top:695.5px;width:90px;height:90px;border-radius:50%;background:#1a7fc5"></div>
<div class="t" style="left:1456px;top:729px;font-size:24px;color:#fff">开始</div>
<div class="a" style="left:1377px;top:808.8px;width:215px;height:24.3px;border:1px solid #cfcfcf;background:#fff"></div>
<div class="a" style="left:1535.8px;top:808.8px;width:56.2px;height:24.3px;background:#dadada"></div>
<svg class="a" style="left:1428px;top:812.5px" width="16" height="16" viewBox="0 0 16 16"><circle cx="8" cy="8" r="6.3" fill="none" stroke="#e8873a" stroke-width="1.5"/><path d="M5.5 5.5L10.5 10.5M10.5 5.5L5.5 10.5" stroke="#e8873a" stroke-width="1.5"/></svg>
<div class="t" style="left:1448.5px;top:814px;font-size:12px;color:#e8873a">未连接</div>
<div class="t" style="left:1550.5px;top:814px;font-size:12px;color:#111;font-weight:bold">切换</div>
</body></html>
